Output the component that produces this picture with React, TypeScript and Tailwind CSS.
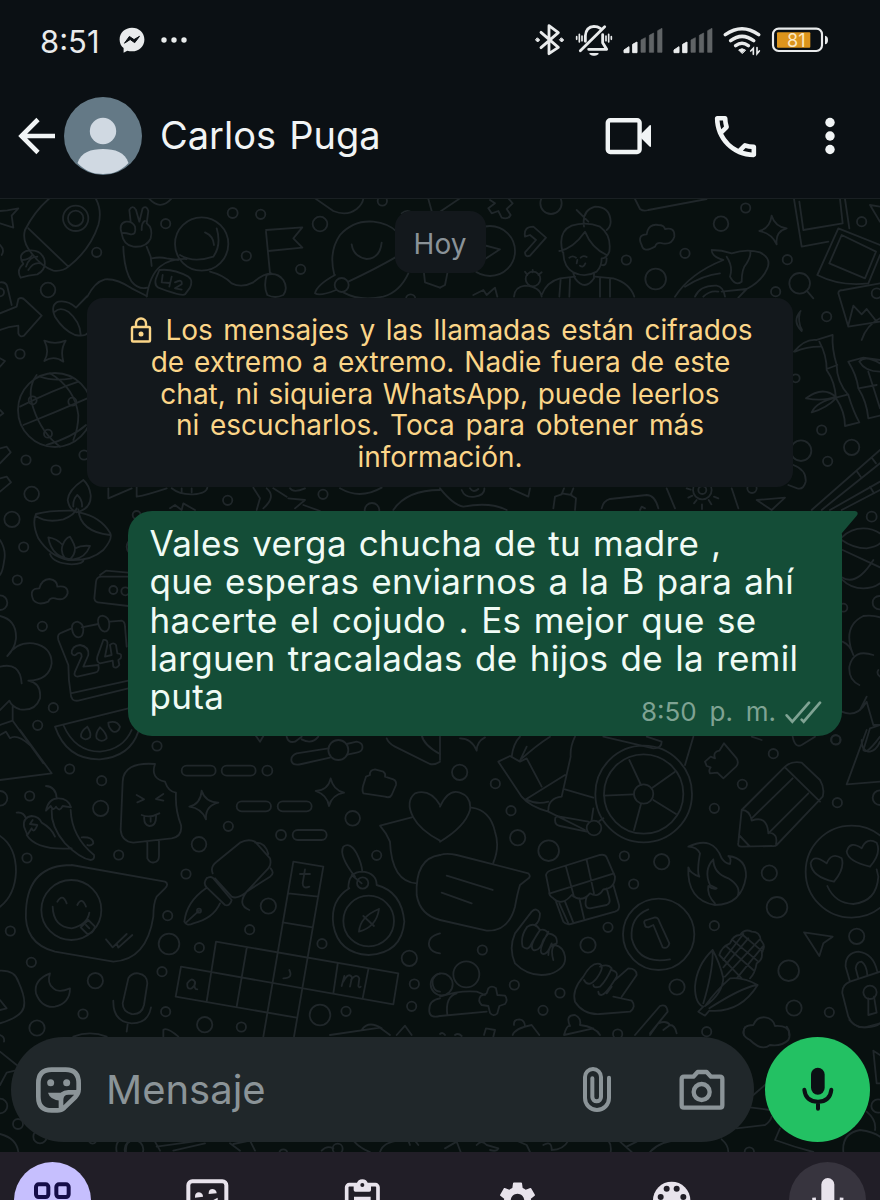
import React from 'react';
import { MdOutlineCall, MdPalette, MdSettings } from 'react-icons/md';

interface DoodleTile {
  x: number;
  y: number;
  paths: string[];
  // cx, cy, r
  circles: number[][];
}

// Every tile is drawn at 3x and scaled down when it is placed on the wallpaper
const tiles: DoodleTile[] = [
  {
    x: 0,
    y: 195,
    paths: [
      // star and rocket
      'M0 48L22 46L55 40L35 62L40 98L0 85',
      'M75 105Q115 25 190 -20M265 -20Q312 30 295 90Q270 165 205 215Q188 230 160 227Q125 215 95 175Q65 140 75 105M85 100L205 215',
      'M62 248Q48 225 70 207Q52 180 78 168Q118 160 132 190Q142 222 112 238Q85 240 62 248M78 215Q88 185 112 185M85 225Q100 200 122 205M68 195Q85 195 96 182',
      // astronaut
      'M365 115Q355 85 378 80Q398 78 405 95Q410 120 392 118Q372 112 365 115M392 80L388 45Q398 28 408 45L418 80L428 40Q440 30 445 48L440 85Q460 100 452 130Q440 158 400 155Q370 150 365 115M425 105Q425 80 435 78',
      'M370 155Q372 225 395 260Q415 285 442 278M440 155L452 185L455 213M455 190Q480 185 500 190L535 195M440 305Q450 240 480 215Q510 190 560 192',
      'M540 180Q580 205 640 185Q665 150 650 100M615 112Q640 122 642 150M478 225Q520 220 565 245Q580 255 570 278L555 298Q545 305 475 278Q462 270 468 250ZM488 240L485 262L508 264M515 245L508 275M525 262Q548 250 545 268L525 280L545 284',
      'M630 230Q670 240 695 265Q725 280 760 262Q790 235 815 235M800 240Q830 230 850 255Q865 280 850 300Q825 312 802 300Q790 275 800 240M798 110L810 235M798 105L907 97L880 130L907 158L805 168',
      'M262 305Q285 260 315 253Q350 250 395 280L440 303M262 303L228 338Q205 315 175 320Q150 330 165 365Q190 405 225 420Q255 425 262 415M165 350Q180 335 205 350Q240 380 242 418',
      // planet
      'M1003 240Q985 170 1020 120Q1060 75 1120 80Q1165 85 1190 110M1030 292Q1080 320 1150 305Q1200 290 1225 235M1055 148Q1060 185 1100 192Q1140 190 1145 143M1005 240Q950 270 945 295Q960 305 1008 285M1045 260Q1130 220 1190 185',
      'M945 10L1000 48Q1040 65 1070 42Q1090 25 1090 8M1285 12L1295 48M1205 55Q1220 42 1235 52M445 8Q480 50 515 10M1272 235L1275 262L1320 278M0 150Q15 165 5 180',
      // arrow, sparkle and globe
      'M0 355L50 335L55 312Q65 305 75 315L125 362L72 422Q60 428 55 415V392Q25 395 0 405M0 262Q18 260 22 275L35 330',
      'M133 437Q165 450 197 437Q180 465 190 500Q162 480 133 498Q150 470 133 437M0 490L15 498L0 515M0 645L10 655L0 662',
      'M60 635Q160 585 235 560M70 690Q170 650 262 610M140 750Q220 725 258 690M110 540Q80 580 100 640Q125 715 180 755M150 535Q225 580 235 660Q235 700 220 735M120 545Q160 560 215 550',
      // lamp flame and the row under the notice
      'M0 760L20 755L32 772L0 805M0 850L20 845L33 862L0 890',
      'M250 855Q205 885 203 915Q208 945 230 952Q275 940 272 900Q268 870 250 855M232 900Q218 915 220 935M232 900Q248 915 246 935',
      'M325 880V910L395 880M410 875V905Q440 900 500 880M515 880Q540 900 580 898Q620 895 622 878M545 880V892M575 880V892M760 878L780 910L770 945M800 880Q830 905 790 940M820 880L860 905M870 880Q880 895 915 880M865 910L915 915L885 940M910 930L960 948M1020 880Q1080 915 1145 878M1180 945Q1220 885 1320 885M510 940L525 930L545 945L550 925L585 945',
    ],
    circles: [
      [227, 70, 38], [227, 70, 23], [698, 54, 15], [782, 58, 14], [497, 86, 14], [290, 172, 14], [144, 285, 22], [60, 477, 14],
      [78, 795, 14], [168, 825, 14], [95, 897, 22], [683, 916, 14], [739, 183, 14], [902, 223, 14], [960, 87, 22], [969, 898, 14],
      [1116, 946, 22], [252, 780, 14], [0, 292, 12], [1147, 18, 14], [1025, 270, 21], [605, 147, 80], [165, 645, 111], [98, 616, 12],
      [217, 620, 12], [144, 716, 12], [1232, 312, 14],
    ],
  },
  {
    x: 440,
    y: 195,
    paths: [
      'M0 50L60 10M150 15L165 25L145 40L155 55L175 48L185 68Q205 75 212 60L200 42L218 25L205 10M130 150L180 163L135 192',
      'M255 125Q250 95 280 95L318 128L270 182Q255 188 255 172L288 135L270 120ZM100 300L130 285L140 300L165 278L172 305M0 278L15 270L22 235',
      // woman with a bun
      'M432 95Q425 45 465 35Q510 35 512 80Q512 95 500 105M410 45L445 80M368 172Q352 110 395 92Q440 78 480 95Q515 120 508 170Q500 190 485 190M358 168Q400 160 435 110Q455 160 500 180M370 172Q370 215 400 232Q435 250 470 230Q485 215 485 190M485 210Q500 215 500 190M388 188Q398 180 408 188M422 188Q430 180 440 186M412 195L410 205M420 212Q430 220 436 205M400 235L405 250Q435 290 462 250V235',
      'M305 300Q320 260 360 250L405 245M465 245L520 250Q570 265 583 305M362 252L358 305M390 250L388 305M480 250V305M510 250V305M222 305Q225 275 255 272Q300 275 305 305M262 240L255 230M278 232V225M295 240L305 232',
      'M605 150Q590 120 620 118Q625 85 655 90Q672 90 675 102Q705 95 703 125Q695 150 668 145Q650 140 645 155Q610 175 605 150',
      'M995 62Q1005 95 1040 100Q1005 110 1010 148Q995 115 958 108Q990 100 995 62',
      // whale
      'M815 165Q845 165 875 175Q920 160 960 172Q995 190 982 220Q965 260 920 282L895 308M815 165Q815 185 850 195Q750 235 705 305M860 185Q880 215 870 245Q885 275 905 260Q905 220 920 205Q935 180 930 168M735 275Q790 240 840 235M765 305Q780 270 830 272Q850 275 855 305M790 305Q810 285 835 290M845 290L920 282',
      'M585 12L600 42Q610 50 625 45L800 12M1062 12L1085 155L1165 140M1078 20L1090 105L1208 85L1200 12M1215 12L1228 100',
      // photos
      'M1195 100L1132 240Q1200 275 1285 265L1320 180M1195 100L1320 150M1205 120L1168 205L1275 250L1308 170ZM1195 295Q1195 285 1210 285L1320 265M1195 295L1225 395L1320 380M1225 390L1240 332L1265 358L1280 342L1310 380M1265 435Q1280 390 1320 370M1290 30L1320 80M1290 30L1320 35M1100 287L1120 310',
      'M1082 348Q1055 378 1085 408M1080 350Q1072 380 1086 405',
      // bamboo
      'M1062 470Q1095 430 1130 435L1178 420Q1175 460 1190 510Q1190 560 1225 600Q1240 650 1258 682L1215 693Q1215 650 1188 610Q1185 560 1160 525Q1160 480 1138 440M1065 470Q1100 455 1140 455M1160 522L1192 510M1188 608L1225 598M1190 608Q1150 570 1098 610Q1150 620 1188 605M1190 608Q1130 620 1115 652Q1160 640 1190 608',
      'M1225 500L1270 488L1320 495M1225 500Q1250 540 1255 580Q1280 620 1285 670L1320 662M1255 580L1310 570M1258 500Q1275 480 1320 505M1258 500Q1275 530 1320 530M1285 530L1320 640',
      'M1060 810Q1100 825 1097 860Q1090 885 1072 880L1045 870M1115 945L1320 765M1145 945L1320 805M1170 945L1320 860M1205 945L1320 885M1250 828L1262 845M1295 788L1308 805M1290 875L1302 895',
      'M0 880Q40 930 70 935Q150 920 200 945M65 885Q75 910 105 905Q135 900 133 880M90 880Q100 895 115 882M210 880L265 905L270 880M372 880L365 898L345 905L340 940M400 880L392 900L408 910L405 945M365 895L395 900M485 940Q490 918 510 912L620 900Q645 900 655 940M680 880L705 940M875 880L895 940M950 915L1035 908L995 945Z',
      'M740 880L752 884M745 908L757 902M762 925L770 915M786 928V942M806 915L814 928M822 905L835 910M600 945L605 935L615 940',
    ],
    circles: [
      [333, 25, 32], [843, 86, 22], [917, 39, 14], [735, 175, 14], [559, 195, 14], [647, 252, 31], [1042, 194, 14], [1265, 80, 14],
      [1007, 290, 14], [1160, 365, 14], [1067, 550, 12], [1145, 705, 14], [1235, 757, 23], [1163, 799, 14], [1083, 767, 31],
      [936, 880, 14], [1079, 265, 31], [787, 885, 28], [787, 885, 12], [279, 252, 22], [150, 168, 75], [1310, 295, 15],
    ],
  },
  {
    x: 0,
    y: 480,
    paths: [
      // oil lamp
      'M228 92Q150 90 108 102Q95 130 115 175Q150 230 205 240Q270 245 310 210Q340 175 330 158Q300 110 240 98M108 108Q140 130 190 118Q225 105 230 85M235 88Q240 155 330 165M150 222Q160 250 215 253Q250 252 252 238M145 172Q170 175 188 195Q195 175 210 170Q225 195 225 205Q245 195 270 198Q255 235 220 238Q155 235 145 172M188 195Q180 215 195 235M225 205Q225 225 210 238',
      'M100 360Q85 325 118 325Q125 298 148 297Q172 300 172 320Q205 315 203 340Q195 365 165 355Q150 352 145 365Q115 378 100 360',
      // cassette and calendar
      'M385 290H305Q290 290 288 305L283 355Q285 368 300 368L385 378M300 285L318 272L385 278',
      'M215 445L185 458Q170 462 175 480L205 555M245 442L295 432M330 425L365 422Q375 425 375 440L380 500M205 555Q205 600 212 640L385 602M212 640Q212 665 235 662L385 625',
      'M218 455Q210 428 232 425Q250 430 250 448Q250 472 235 472Q222 470 218 455M295 432Q290 408 308 407Q328 412 328 432Q328 455 314 455Q300 452 295 432',
      'M215 520Q215 498 240 495Q268 500 265 525L250 560L295 555Q300 575 285 578L232 590Q220 588 225 575L245 530Q245 515 232 520Q222 532 215 520M310 480Q325 478 322 495L315 530L335 525L330 495Q340 485 348 495L352 520Q368 520 362 535L355 540L358 555Q348 568 340 560L338 542L300 550Q288 545 292 530Z',
      // tree
      'M0 408Q50 420 48 475Q45 505 22 528M22 528Q50 485 100 490Q155 500 155 550Q148 600 85 602M0 560Q60 545 65 610M85 602Q125 610 120 655Q105 695 60 688Q35 680 28 662L0 690M38 680V722L0 735M38 722L130 850',
      // watermelon
      'M165 740L385 685M165 740Q200 840 300 838Q390 830 415 755M190 735Q225 815 300 815Q370 808 395 750M262 740Q275 760 270 772Q255 785 243 770Q240 755 262 740M300 742Q320 760 320 775Q305 790 290 775Q285 760 300 742M325 728Q350 720 360 740Q355 758 340 755Q325 745 325 728',
      'M0 765L18 755L30 775Q50 760 90 795M0 180Q20 210 12 245Q8 275 0 285M385 185Q375 200 385 215',
    ],
    circles: [
      [36, 118, 23], [71, 201, 14], [52, 300, 14], [127, 439, 14], [160, 683, 14], [113, 736, 14], [340, 330, 12], [376, 334, 12],
      [0, 368, 22], [410, 105, 12],
    ],
  },
  {
    x: 600,
    y: 480,
    paths: [
      'M725 180Q760 205 800 205Q830 200 840 190M728 210L840 262M725 292Q770 320 820 240',
      'M760 525Q725 440 790 408Q820 405 840 412M820 525Q760 505 748 560Q745 600 778 615M728 485Q750 495 758 520M725 695Q770 715 800 665L820 735H840M800 650L780 690M835 570Q828 580 840 590M790 810L810 745L840 735M790 810Q800 825 840 770',
    ],
    circles: [[815, 110, 15], [708, 780, 14], [730, 383, 12], [838, 368, 20], [790, 235, 90]],
  },
  {
    x: 0,
    y: 730,
    paths: [
      'M0 150L155 130L60 0M0 318Q48 350 48 425Q45 495 0 530',
      // morse code
      'M560 107H632a15 15 0 0 1 0 30H560a15 15 0 0 1 0 -30M680 107H752a15 15 0 0 1 0 30H680a15 15 0 0 1 0 -30M725 214H798a15 15 0 0 1 0 30H725a15 15 0 0 1 0 -30M848 214H920a15 15 0 0 1 0 30H848a15 15 0 0 1 0 -30M893 300H965a15 15 0 0 1 0 30H893a15 15 0 0 1 0 -30',
      'M985 55L890 70Q870 78 875 95Q880 108 905 102L990 83M1040 42L1070 35Q1090 38 1087 55Q1085 65 1070 68L1042 74',
      'M768 18L780 35L790 18M860 20Q865 40 885 35L905 20M905 28Q935 45 955 20M1160 25Q1165 40 1185 50L1290 102Q1305 105 1320 95M1265 15Q1270 45 1320 72',
      // sparkles and brick
      'M605 182Q615 215 655 218Q615 228 618 268Q605 235 568 230Q602 222 605 182M992 145Q1000 180 1032 188Q995 195 987 228Q982 195 947 183Q985 180 992 145',
      'M1090 190Q1085 180 1090 165L1098 140L1110 135Q1108 120 1125 118L1150 125Q1158 130 1155 140L1180 148Q1190 152 1188 165L1175 195Q1170 205 1155 200Z',
      // chillies
      'M50 248Q70 245 78 265M72 290Q68 262 95 258Q118 260 125 278Q155 295 165 320M72 290L82 315L95 295Q102 312 112 285L90 282L98 270M80 315Q110 362 215 355M138 168Q168 170 170 205M138 242Q145 205 175 205Q205 205 213 232M138 242L152 228Q160 245 168 230Q178 248 188 228L213 232M155 240Q152 290 195 340Q240 385 272 390Q285 388 282 375Q215 320 212 240M245 322Q280 320 280 340Q270 350 262 345',
      // ice lolly
      'M465 102Q370 95 368 155L362 300Q365 335 400 338L515 325Q548 320 543 285Q525 240 528 188Q505 185 495 155Q450 145 465 102M442 335V385Q450 400 462 397Q478 395 477 375V333M410 195L432 208L412 217M490 192L468 207L490 212M425 255Q450 265 478 250M433 258Q430 285 448 288Q470 288 468 255M452 262V275',
      // winking message
      'M215 405L495 455Q508 462 495 475L470 500Q460 520 460 560Q440 690 340 695L165 665Q70 640 78 540Q85 405 215 405',
      'M158 530Q160 590 215 595Q262 585 268 548M172 515Q188 488 200 520M232 525Q245 498 258 530M242 592L265 570L285 590Q280 612 262 612ZM258 585L268 595M318 628L338 652L380 612M350 640L355 653L397 615',
      // fountain pen
      'M638 430Q630 410 650 395L720 338Q745 325 765 335L810 385Q815 405 805 415L735 490Q710 508 695 500L645 445M620 445Q608 460 620 472L675 525Q690 530 695 510L638 443Q630 438 620 445M618 475Q560 515 553 575Q560 590 580 580Q640 565 660 520M558 578L597 542M765 338Q795 335 805 372M812 415Q825 430 810 440Q770 465 740 485Q710 525 748 540',
      // crossword
      'M790 920L880 395L970 410L882 920M865 490L955 500M848 577L938 592M648 635L1195 730L1180 823L543 710L527 800L890 863M648 635L620 815M740 655L710 830M1013 702L1000 790M1105 718L1088 805',
      'M900 432H930M915 418L908 460Q908 478 928 470M585 755Q575 740 562 760Q560 780 575 775Q588 765 585 755Q580 778 592 778M868 720Q880 745 850 745M1025 768L1033 738M1030 755Q1045 725 1056 742L1050 770M1053 750Q1070 728 1078 745L1075 768Q1078 775 1082 770',
      // compass
      'M1045 475Q1045 425 1088 425Q1130 430 1130 465M1065 440Q1015 375 1030 350Q1050 335 1070 370Q1085 400 1087 425M1055 435L1085 460M1048 475Q990 510 1000 585Q1015 670 1106 675Q1205 670 1213 575Q1205 485 1130 465M1137 537Q1130 590 1077 605Q1080 560 1137 537M1090 558L1122 588',
      // heart balloons
      'M1235 262L1140 287Q1160 310 1170 335Q1175 455 1250 460M1320 225Q1290 175 1245 190Q1215 215 1240 262Q1260 300 1320 332M1320 375Q1245 385 1250 495Q1260 555 1320 570',
      // moon, microphone
      'M150 730Q100 750 108 790Q125 835 165 830Q210 820 210 775Q175 790 160 775Q140 760 150 730',
      'M385 745Q395 728 415 730Q442 735 442 760L432 825Q425 855 395 852Q368 845 368 820ZM340 812Q338 875 395 880Q445 880 453 832M383 882L380 905',
      'M0 722Q45 720 55 755Q85 820 65 845Q50 865 0 880M0 810L20 835L0 840M490 920V900Q500 890 535 920M990 915L1140 893L1170 915M1085 900Q1105 870 1145 895M1190 915L1215 887L1235 915M1320 610Q1280 620 1288 650Q1295 668 1320 670M1320 730Q1290 740 1300 770Q1305 785 1320 785M1320 805Q1285 810 1288 845Q1290 865 1320 858',
    ],
    circles: [
      [471, 48, 14], [209, 117, 14], [305, 152, 14], [89, 198, 14], [302, 235, 23], [81, 384, 14], [356, 375, 14], [802, 122, 15],
      [685, 289, 14], [597, 343, 22], [843, 315, 15], [558, 432, 14], [1058, 265, 22], [1130, 376, 14], [805, 528, 23], [503, 557, 14],
      [749, 599, 14], [507, 642, 31], [598, 653, 14], [31, 603, 14], [94, 697, 14], [286, 752, 23], [486, 725, 14], [497, 845, 14],
      [249, 852, 14], [111, 894, 23], [614, 884, 23], [724, 891, 14], [966, 641, 14], [1228, 685, 23], [1243, 762, 14],
      [1235, 829, 14], [960, 855, 31], [1038, 844, 14], [1015, 60, 30], [214, 540, 90], [1088, 459, 17], [1106, 573, 76], [0, 205, 22],
      [597, 542, 6],
    ],
  },
  {
    x: 440,
    y: 730,
    paths: [
      'M60 25Q95 25 110 62Q110 35 135 22M0 20V90M215 80Q220 40 240 20M238 92Q290 45 330 20M260 50L240 92',
      // wheelchair
      'M175 95L210 78L240 95L260 85L305 170M175 95L245 200Q270 230 325 245L435 300M258 208L375 135M405 20Q390 50 392 80L365 200Q325 205 325 240M258 208Q290 225 325 215M375 178L460 203M460 235L455 270M345 270Q345 255 360 260L445 275M345 270Q345 285 360 288L440 305M490 20L640 55Q665 55 665 35L620 20M760 20L735 105M490 265L475 275',
      'M568 90L603 165M705 125L635 175M640 210L708 252M603 222L582 300M492 197L580 193',
      // puzzle piece and pencil
      'M795 95L812 80L825 85Q818 65 838 62L852 40L890 85Q898 100 888 110L850 145L832 128L810 130Q805 120 812 112L800 108Z',
      'M905 240L1035 110Q1055 92 1085 98L1140 150Q1155 175 1148 200L1010 345Q1005 350 995 348L905 350Q892 350 895 338ZM1035 112L1140 215M935 265L1058 145M985 310L1105 190M905 240Q930 240 935 272Q980 255 985 308Q1015 310 1008 342M897 315L928 348M1280 0L1220 163L1320 155M1265 30Q1265 65 1290 65Q1310 60 1320 35M1058 20Q1065 55 1085 45L1125 20M935 20L965 30',
      // heart balloons and note
      'M0 230Q25 175 60 188Q95 200 90 240Q75 290 0 335M95 233Q150 240 165 305Q180 350 160 398M0 375Q20 368 50 375L265 430Q275 440 262 448L240 465Q232 490 225 530Q205 605 140 602L0 570M20 437L158 480M5 488L95 520',
      // stall
      'M318 435Q320 425 335 420L480 375Q495 372 500 382L525 440Q525 475 490 478Q475 505 450 490Q425 520 395 495Q365 530 340 505Q325 495 328 485ZM330 490L522 430M378 410L402 500M440 390L462 490M348 515L370 575Q378 585 392 582L525 545Q540 540 537 525L520 465M358 520L385 580M375 515L400 578M418 505L432 565M440 500Q430 535 450 535L500 525Q512 520 508 505L500 475',
      // fire
      'M745 350Q820 315 845 385Q855 400 870 402Q875 385 865 378Q920 385 918 440Q905 525 825 525Q740 510 745 412Q750 430 778 440Q770 425 780 370Q770 350 745 350M820 388Q790 420 810 465L830 475Q820 480 805 468Q800 495 825 520M820 388Q820 430 865 445Q905 470 893 498',
      // smiley with hearts
      'M1182 455Q1115 440 1112 400Q1120 370 1160 400Q1175 365 1205 385Q1215 415 1182 455M1290 410Q1225 395 1220 365Q1230 330 1265 355Q1280 320 1310 338Q1325 370 1290 410M1162 468Q1185 520 1240 522Q1310 515 1315 440L1310 418',
      // coin
      'M625 538Q570 560 575 625Q595 705 690 688M615 585Q608 572 620 570L645 562Q655 562 658 575L688 640Q685 658 668 652L640 585L625 592Q615 592 615 585',
      // hands
      'M275 545Q290 530 300 550Q300 575 285 585M275 545L225 610Q205 655 225 700Q270 745 330 732Q380 715 375 680Q370 650 345 645Q330 655 340 690M262 590Q240 620 248 650Q265 665 275 640L300 600Q285 575 262 590M300 600Q265 650 280 660Q300 665 310 630L325 610Q315 595 300 600M325 605Q295 660 305 670Q320 680 335 640M325 610Q355 615 350 640Q325 645 325 675',
      'M430 740Q395 780 405 815Q430 855 480 852L570 845Q590 830 575 812L520 800M430 740Q455 695 480 702Q495 710 470 745Q445 775 432 750M480 710Q505 700 515 715Q500 750 480 770Q460 775 460 765M515 720Q535 725 530 740Q500 790 485 795Q475 795 475 785M525 750L565 715Q590 715 590 735L545 800M515 770L500 790',
      'M585 915L660 828Q680 820 683 845L630 910M655 880Q680 870 690 885L670 900M690 885Q705 885 710 910M630 915L655 880',
      // corn
      'M850 745Q840 700 818 660Q770 705 765 770Q765 820 790 830L775 845L795 857L808 842Q900 850 953 765Q910 740 870 745Q825 785 795 828Q850 790 850 740M818 660Q820 720 790 820M950 765Q900 775 808 835M838 675Q845 650 870 640Q880 615 900 615Q915 595 935 605Q960 605 962 630Q980 650 965 665Q970 690 950 700Q945 730 930 745M838 675L905 745M860 650L940 720M880 632L955 695M905 612L968 665M850 712L925 625M855 740L958 630M890 745L968 650M850 690L910 612',
      // location arrow, people, padlock
      'M1092 607L1178 620L1150 640L1138 678Z',
      'M0 800Q60 780 110 785L135 795M22 855Q15 800 50 790M0 858L140 845M140 790L145 775Q155 765 168 775L172 795L195 797Q205 810 195 822L178 828L172 850Q160 862 150 848L145 828L125 825Q112 812 122 798Z',
      'M1230 755L1217 710Q1215 670 1255 665Q1300 670 1312 725M1255 745L1247 715Q1250 695 1265 695Q1280 705 1282 735M1207 790Q1205 765 1230 755L1320 725M1207 790L1225 860Q1240 895 1275 892L1320 880M1285 805V855L1310 848L1302 800',
      'M912 915Q905 885 940 885Q950 860 975 862Q1000 865 1005 888Q1050 885 1047 915M222 885Q220 868 238 868Q255 870 255 890M218 915Q225 895 275 885L298 915M138 895L165 900L160 920M132 915L138 895M372 915Q380 885 390 888Q375 855 405 855Q425 865 420 885Q465 890 480 915M372 915L460 895M0 912Q8 905 15 915M45 915Q55 908 65 918',
    ],
    circles: [
      [59, 127, 23], [166, 161, 14], [213, 242, 14], [233, 323, 23], [326, 362, 31], [553, 378, 14], [665, 395, 23], [581, 462, 14],
      [504, 592, 14], [444, 645, 23], [823, 587, 14], [823, 235, 14], [907, 163, 14], [1000, 71, 14], [1187, 29, 14], [1192, 218, 14],
      [988, 429, 23], [1011, 532, 31], [1250, 619, 23], [1046, 722, 31], [1062, 834, 23], [1168, 847, 14], [127, 660, 14],
      [223, 765, 14], [360, 789, 14], [309, 841, 14], [711, 771, 23], [800, 905, 14], [533, 912, 14], [79, 733, 39], [611, 192, 145],
      [611, 192, 119], [611, 192, 29], [462, 294, 22], [1235, 425, 138], [656, 613, 107], [1290, 787, 20], [5, 763, 33],
      [1320, 203, 22],
    ],
  },
  {
    x: 0,
    y: 1020,
    paths: [
      'M0 95L50 135M0 195L20 158L45 152M0 342Q50 355 55 396M265 362Q278 380 290 362M350 396Q345 370 360 360M378 396Q375 362 402 360M465 365L480 392M470 380L600 362M520 392L615 370M690 370L720 392M700 372L750 362L765 392M1060 362Q1080 385 1110 396M1140 396Q1150 365 1200 362M1225 362L1230 375M1245 362L1255 375M0 45Q15 50 12 65M220 50Q270 30 320 50M965 392Q980 375 1000 385',
    ],
    circles: [[54, 312, 15], [120, 350, 20], [402, 388, 28], [0, 258, 22], [1013, 386, 15], [850, 400, 12]],
  },
  {
    x: 440,
    y: 1020,
    paths: [
      'M15 385L50 365L62 396M110 375Q125 358 140 375L175 385Q170 396 150 390M230 362L260 375L270 396M310 375Q335 360 335 390Q370 390 385 362M505 362Q515 375 512 396M540 365L575 396M560 380L590 365M630 396Q660 362 720 360M845 358Q865 375 865 396',
      'M930 60Q965 95 990 75Q1025 80 1045 60Q1055 40 1040 20M930 60Q900 45 915 22M940 225L975 195M930 262L990 270M890 325L975 315Q990 305 995 290M1005 360L1020 325M1005 360Q1060 380 1120 396M1210 396Q1205 340 1260 330Q1300 335 1320 350M1280 275Q1310 300 1305 330M1300 92L1320 105M1300 92L1310 190L1320 190M1228 0Q1250 25 1280 22Q1310 20 1320 10',
    ],
    circles: [[1314, 258, 20], [928, 396, 14]],
  },
];

const Wallpaper: React.FC = () => (
  <svg className="absolute inset-0 h-full w-full" viewBox="0 199 880 953" fill="none" stroke="#20272a" strokeWidth="5.5" strokeLinecap="round" strokeLinejoin="round">
    {tiles.map((tile, i) => (
      <g key={i} transform={`translate(${tile.x} ${tile.y}) scale(0.33333)`}>
        {tile.paths.map((d, j) => <path key={j} d={d} />)}
        {tile.circles.map(([cx, cy, r], j) => <circle key={j} cx={cx} cy={cy} r={r} />)}
      </g>
    ))}
  </svg>
);

const Signal: React.FC = () => (
  <svg className="h-10 w-10" viewBox="312 60 120 120">
    <path d="M315 158V150L330 140V158ZM341 158V133L354 126V158Z" fill="#e9ebec" stroke="#e9ebec" strokeWidth="3" strokeLinejoin="round" />
    <path d="M366 157V120L379 113V157ZM391 157V106L404 99V157ZM416 157V92L429 85V157Z" fill="#606466" stroke="#606466" strokeWidth="2" strokeLinejoin="round" />
  </svg>
);

const StatusBar: React.FC = () => (
  <div className="flex h-20 items-center pl-[40px] pr-[51px] text-[#e9ebec]">
    <span className="relative top-px w-[60px] whitespace-nowrap text-[31px] leading-none">8:51</span>
    <svg className="ml-[19px] h-[26px] w-[26px]" viewBox="0 0 26 26">
      <path d="M13 .7C6 .7.6 5.8.6 12.4c0 3.6 1.5 6.600 4 8.700v4.600l3.700-2c1.500.4 3 .6 4.700.6 7 0 12.400-5.100 12.400-11.900S20 .7 13 .7Z" fill="currentColor" />
      <path d="M5.500 16.200 10.400 9.400 15 12.600 20.500 9.300 15.700 15.700 11.200 12.500Z" fill="#0b1014" stroke="#0b1014" strokeLinejoin="round" />
    </svg>
    <svg className="ml-[15px] h-2 w-7" viewBox="0 0 28 8" fill="currentColor">
      <circle cx="4" cy="4" r="2.7" />
      <circle cx="14" cy="4" r="2.7" />
      <circle cx="24" cy="4" r="2.7" />
    </svg>
    <div className="ml-auto flex items-center gap-2.5">
      <svg className="h-10 w-[30px]" viewBox="46 60 90 120" fill="none" stroke="currentColor" strokeWidth="8.500" strokeLinejoin="round" strokeLinecap="round">
        <path d="M64 97L116 142L88 161V77L116 98L64 143" />
        <path d="M54 114L60 120L54 126L48 120ZM126 114L132 120L126 126L120 120Z" fill="currentColor" strokeWidth="3" />
      </svg>
      <svg className="h-10 w-[38px]" viewBox="168 60 114 120" fill="none" stroke="currentColor" strokeWidth="8.500" strokeLinecap="round" strokeLinejoin="round">
        <path d="M199 124V108Q201 80 225 79Q236 79 244 85M251 104V128L263 148H209M184 152L257 80" />
        <path d="M213 161H237Q225 170 213 161Z" strokeWidth="4" fill="currentColor" />
        <path d="M173 110V118M181 103V126M189 108V122M261 108V122M269 103V126M277 110V118" strokeWidth="5" />
      </svg>
      <Signal />
      <Signal />
      <svg className="h-10 w-[38px]" viewBox="607 60 114 120" fill="none" stroke="currentColor" strokeWidth="10.500" strokeLinecap="round">
        <path d="M614 104Q664 68 714 104M630 122Q664 96 699 122M645 137Q664 123 683 137" />
        <path d="M664 160L654 150Q664 142 674 150Z" fill="currentColor" strokeWidth="3" />
        <path d="M698 163V145L690 153M709 143V161L716 153" strokeWidth="5" />
      </svg>
      <svg className="h-10 w-[58px]" viewBox="755 60 174 120">
        <rect x="761" y="86" width="147" height="67" rx="17" fill="none" stroke="currentColor" strokeWidth="6.500" />
        <rect x="773" y="97" width="100" height="46" rx="3" fill="#dc941c" />
        <path d="M917 107Q926 108 926 120Q926 132 917 133Z" fill="currentColor" />
        <text x="831" y="140" textAnchor="middle" fontSize="54" fill="#fbe9c4">81</text>
      </svg>
    </div>
  </div>
);

const Header: React.FC = () => (
  <header className="flex h-28 items-center pl-[18px] text-[#f1f4f5]">
    <svg className="h-10 w-10" viewBox="18 116 40 40" fill="none" stroke="currentColor" strokeWidth="4.600">
      <path d="M55 136H23M38 119.500L21.500 136L38 152.500" />
    </svg>
    <svg className="ml-[6px] h-[78px] w-[78px]" viewBox="0 0 78 78">
      <circle cx="39" cy="39" r="39" fill="#647986" />
      <circle cx="39" cy="34" r="13.200" fill="#d0d9e2" />
      <path d="M13.500 66C17 55 27 52 39 52S61 55 64.500 66C57 74 49 77 39 77S21 74 13.500 66Z" fill="#d0d9e2" />
    </svg>
    <h1 className="relative -top-px ml-[18px] w-[240px] whitespace-nowrap text-[38px] leading-none [word-spacing:2.500px]">Carlos Puga</h1>
    <svg className="ml-auto h-10 w-12" viewBox="605 116 48 40">
      <rect x="607.800" y="120.200" width="31.800" height="31.800" rx="2.500" fill="none" stroke="currentColor" strokeWidth="4.400" />
      <path d="M641 134L649.500 125.500Q651 124.500 651 126V146Q651 147.500 649.500 146.500L641 138Z" fill="currentColor" />
    </svg>
    <MdOutlineCall className="ml-[55px] h-[55px] w-[55px]" />
    <svg className="mr-[42px] ml-[59px] h-10 w-4" viewBox="0 0 16 40" fill="currentColor">
      <circle cx="8" cy="6.500" r="4.700" />
      <circle cx="8" cy="20" r="4.700" />
      <circle cx="8" cy="33.500" r="4.700" />
    </svg>
  </header>
);

const EncryptionNotice: React.FC = () => (
  <div className="mt-[25px] flex h-[189px] w-[706px] flex-col items-center rounded-2xl bg-[#13181c] pt-[17px] text-[28px] leading-[31.75px] whitespace-nowrap text-[#fbd588]">
    <p className="flex items-center pl-[3px] [word-spacing:2.600px]">
      <svg className="relative -top-px mr-[13px] h-[26px] w-[22px]" viewBox="0 0 22 26" fill="none" stroke="currentColor" strokeWidth="2.400">
        <rect x="2" y="10" width="18" height="14.500" rx="1" />
        <path d="M6 10V6.500a5 5 0 0 1 10 0V10" />
        <circle cx="11" cy="17" r="2.500" fill="currentColor" stroke="none" />
      </svg>
      Los mensajes y las llamadas están cifrados
    </p>
    <p className="pl-px [word-spacing:2px]">de extremo a extremo. Nadie fuera de este</p>
    <p className="[word-spacing:1.800px]">chat, ni siquiera WhatsApp, puede leerlos</p>
    <p className="[word-spacing:2.900px]">ni escucharlos. Toca para obtener más</p>
    <p>información.</p>
  </div>
);

const Message: React.FC = () => (
  <div className="relative mt-[24px] mr-[38px] h-[225px] w-[714px] self-end rounded-3xl bg-[#144d37] pt-[13px] pl-[22px]">
    <svg className="absolute top-0 -right-[16px] h-[23px] w-[41px]" viewBox="0 0 41 23">
      <path d="M0 0H37.500C41 0 41.500 3 39.500 5L25 22H0Z" fill="#144d37" />
    </svg>
    <div className="relative -left-[0.500px] text-[35px] leading-[38.300px] tracking-[0.300px] whitespace-nowrap text-[#f0fbf5]">
      <p className="[word-spacing:1.700px]">Vales verga chucha de tu madre ,</p>
      <p className="[word-spacing:2px]">que esperas enviarnos a la B para ahí</p>
      <p className="[word-spacing:2.200px]">hacerte el cojudo . Es mejor que se</p>
      <p className="[word-spacing:2.100px]">larguen tracaladas de hijos de la remil</p>
      <p>puta</p>
    </div>
    <div className="absolute right-[20px] bottom-[8px] flex items-center text-[#7fa393]">
      <span className="text-[26px] leading-8 [word-spacing:5.500px]">8:50 p. m.</span>
      <svg className="ml-[9px] h-6 w-[37px]" viewBox="558 652 111 72" fill="none" stroke="currentColor" strokeWidth="8" strokeLinecap="round">
        <path d="M563 698L580 717L630 660M608 711L614 717L663 660" />
      </svg>
    </div>
  </div>
);

const Composer: React.FC = () => (
  <div className="relative mt-auto mb-[10px] ml-[11px] flex items-center self-start">
    <div className="flex h-[105px] w-[743px] items-center rounded-full bg-[#20272a] text-[#8b9498]">
      <svg className="ml-[24px] h-12 w-12" viewBox="105 138 144 144">
        <path
          d="M155 149H197Q236 149 236 190V208Q236 221 226 231L193 263Q184 271 172 271H155Q115 271 115 230V190Q115 149 155 149ZM183 270V240Q183 217 205 217H236"
          fill="none"
          stroke="currentColor"
          strokeWidth="14"
          strokeLinejoin="round"
        />
        <circle cx="152" cy="188" r="10.500" fill="currentColor" />
        <circle cx="200" cy="188" r="10.500" fill="currentColor" />
        <path d="M144 218H200L182 242Q150 240 144 218Z" fill="currentColor" />
      </svg>
      <span className="ml-[23px] text-[40px] leading-none">Mensaje</span>
      <svg className="ml-auto h-[50px] w-[30px]" viewBox="426 132 90 150" fill="none" stroke="currentColor" strokeWidth="12" strokeLinecap="round">
        <path d="M507 170V231A36 36 0 0 1 435 231V168A24 24 0 0 1 483 168V228A13 13 0 0 1 457 228V172" />
      </svg>
      <svg className="mr-[28px] ml-[66px] h-[50px] w-12" viewBox="711 136 144 150" fill="none" stroke="currentColor" strokeWidth="13" strokeLinejoin="round">
        <path d="M722 178Q722 171 729 171H757L770 157H797L810 171H837Q844 171 844 178V257Q844 264 837 264H729Q722 264 722 257Z" />
        <circle cx="782" cy="217" r="24" />
      </svg>
    </div>
    <div className="ml-[11px] flex h-[105px] w-[105px] items-center justify-center rounded-full bg-[#23c163]">
      <svg className="h-12 w-10" viewBox="1075 137 120 144">
        <rect x="1114" y="142" width="41" height="81" rx="20.500" fill="#0b1014" />
        <path d="M1094 208Q1098 244 1135 244Q1171 244 1175 208M1135 244V265" fill="none" stroke="#0b1014" strokeWidth="12" strokeLinecap="round" />
      </svg>
    </div>
  </div>
);

const KeyboardBar: React.FC = () => (
  <div className="flex h-12 items-start gap-[78px] overflow-hidden bg-[#211e27] pt-[10px] pl-[14px] text-[#e8e3ec]">
    <div className="h-[77px] w-[77px] shrink-0 rounded-full bg-[#c6bffe]">
      <svg className="h-full w-full" viewBox="42 427 231 231" fill="none" stroke="#150d48" strokeWidth="12">
        <rect x="108" y="494" width="37" height="38" rx="8" />
        <rect x="169" y="494" width="37" height="38" rx="8" />
        <rect x="108" y="554" width="37" height="38" rx="8" />
        <rect x="169" y="554" width="37" height="38" rx="8" />
      </svg>
    </div>
    <svg className="h-[77px] w-[77px] shrink-0" viewBox="507 427 231 231" fill="currentColor">
      <rect x="565" y="485" width="114" height="110" rx="12" fill="none" stroke="currentColor" strokeWidth="12" />
      <path d="M585 534Q584 518 597 518Q609 520 609 531ZM626 523Q625 508 638 508Q650 510 650 521ZM640 541L653 534V545Z" />
    </svg>
    <svg className="h-[77px] w-[77px] shrink-0" viewBox="972 427 231 231">
      <rect x="1040" y="495" width="94" height="100" rx="8" fill="none" stroke="currentColor" strokeWidth="11" />
      <path d="M1061 492H1070Q1074 479 1087 479Q1100 479 1104 492H1113V511Q1113 516 1108 516H1066Q1061 516 1061 511ZM1062 531H1112V541H1062Z" fill="currentColor" />
      <circle cx="1087" cy="496" r="6" fill="#211e27" />
    </svg>
    <div className="flex h-[77px] w-[77px] shrink-0 items-center justify-center">
      <MdSettings className="h-[45px] w-[45px]" />
    </div>
    {/* MdPalette has only four holes, the upper pair is set closer together here */}
    <svg className="h-[77px] w-[77px] shrink-0" viewBox="582 427 231 231">
      <circle cx="695" cy="542" r="56" fill="currentColor" />
      <g fill="#211e27">
        <circle cx="680" cy="507" r="9" />
        <circle cx="710" cy="507" r="9" />
        <circle cx="662" cy="532" r="9" />
        <circle cx="730" cy="532" r="9" />
      </g>
    </svg>
    <div className="h-[77px] w-[77px] shrink-0 rounded-full bg-[#37343e]">
      <svg className="h-full w-full" viewBox="1047 427 231 231" fill="none" stroke="currentColor" strokeWidth="11">
        <rect x="1144" y="475" width="39" height="86" rx="19.500" fill="currentColor" stroke="none" />
        <path d="M1122 534Q1124 580 1163 580Q1203 580 1205 534" />
      </svg>
    </div>
  </div>
);

const App: React.FC = () => {
  return (
    <div className="flex h-[1200px] w-[880px] flex-col overflow-hidden bg-[#0b1014] font-[Inter,sans-serif]">
      <div className="h-[199px] shrink-0 border-b border-[#1a2023]">
        <StatusBar />
        <Header />
      </div>
      <main className="relative flex flex-1 flex-col items-center bg-[#08100f]">
        <Wallpaper />
        <div className="relative mt-[12px] flex h-[62px] w-[91px] items-center justify-center rounded-2xl bg-[#13181c] pt-[3px] text-[28px] leading-none text-[#8a9298]">
          Hoy
        </div>
        <div className="relative">
          <EncryptionNotice />
        </div>
        <Message />
        <Composer />
      </main>
      <KeyboardBar />
    </div>
  );
};

export default App;
